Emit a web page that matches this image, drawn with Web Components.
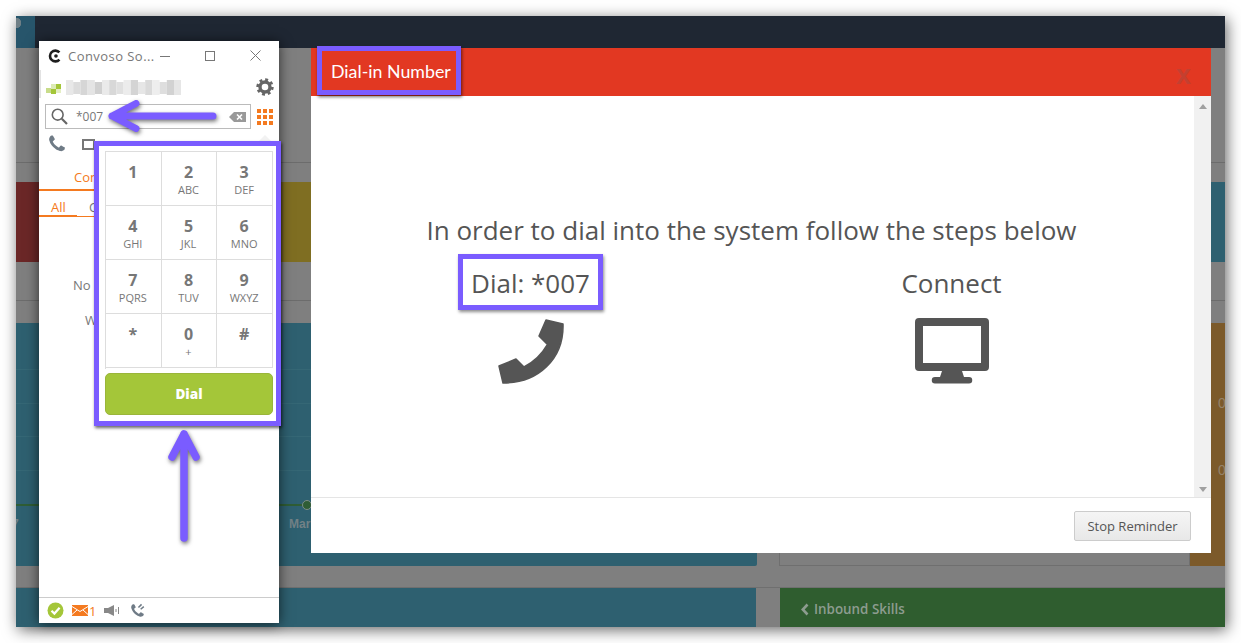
<!DOCTYPE html>
<html lang="en">
<head>
<meta charset="utf-8">
<title>Dial-in Number</title>
<style>
  html, body { margin: 0; background: #fff; overflow: hidden; }
  body { font-family: "Open Sans", sans-serif; }
</style>
</head>
<body>
<help-shot>
  <dash-backdrop></dash-backdrop>
  <soft-phone></soft-phone>
  <reminder-modal></reminder-modal>
</help-shot>

<script>
const PHONE_D = 'M1600 1240q0 27-10 70.5t-21 68.5q-21 50-122 106-94 51-186 51-27 0-53-3.5t-57.5-12.5-47-14.5-55.5-20.5-49-18q-98-35-175-83-127-79-264-216t-216-264q-48-77-83-175-3-9-18-49t-20.5-55.5-14.5-47-12.5-57.5-3.5-53q0-92 51-186 56-101 106-122 25-11 68.5-21t70.5-10q14 0 21 3 18 6 53 76 11 19 30 54t35 63.5 31 53.5q3 4 17.5 25t21.5 35.5 7 28.5q0 20-28.5 50t-62 55-62 53-28.5 46q0 9 5 22.5t8.5 20.5 14 24 11.5 19q76 137 174 235t235 174q2 1 19 11.5t24 14 20.5 8.5 22.5 5q18 0 46-28.5t53-62 55-62 50-28.5q14 0 28.5 7t35.5 21.5 25 17.5q25 15 53.5 31t63.5 35 54 30q70 35 76 53 3 7 3 21z'

class HelpShot extends HTMLElement {
  constructor () {
    super()
    this.shadow = this.attachShadow({ mode: 'open' })
  }

  connectedCallback () {
    this.shadow.innerHTML =
      /* html */`
      <style>
        :host {
          display: block;
          position: relative;
          width: 1209px;
          height: 611px;
          margin: 16px;
          box-shadow: 2px 3px 14px rgba(0, 0, 0, 0.6);
        }
      </style>
      <slot></slot>
      `
  }
}

class DashBackdrop extends HTMLElement {
  constructor () {
    super()
    this.shadow = this.attachShadow({ mode: 'open' })
  }

  connectedCallback () {
    this.shadow.innerHTML =
      /* html */`
      <style>
        * { box-sizing: border-box; }
        :host {
          display: flex;
          flex-direction: column;
          width: 1209px;
          height: 611px;
          overflow: hidden;
          background: #7f7f7f;
          font-family: "Liberation Sans", sans-serif;
        }
        .top { height: 32px; background: #1f2733; flex: none; }
        .top div { width: 19px; height: 32px; background: radial-gradient(circle at 0 7px, #6f7f86 5px, transparent 5.5px), #27556b; }
        .strip { flex: none; height: 134px; padding-top: 114px; }
        .strip.small { height: 61px; padding-top: 38px; }
        .strip div { height: 1px; background: #6c6c6c; }
        .cards { flex: none; height: 80px; display: grid; grid-template-columns: 104px 1fr 400px 14px; }
        .red { background: #6b2727; }
        .olive { background: #7f6e22; }
        .teal { background: #2e6070; }
        .panels { flex: none; height: 243px; display: flex; gap: 22px; }
        .chart {
          width: 741px;
          position: relative;
          background: #2e6070;
          border-radius: 0 0 2px 0;
        }
        .gridline { position: absolute; left: 0; right: 0; height: 1px; background: #356775; }
        .trend { position: absolute; left: 0; right: 0; top: 181px; height: 2px; background: #2f5d35; }
        .dot {
          position: absolute;
          left: 286px;
          top: 177px;
          width: 10px;
          height: 10px;
          border-radius: 50%;
          background: #2f5d35;
          border: 1px solid #7d8d86;
        }
        .tick { position: absolute; top: 194px; font-size: 12px; font-weight: bold; color: #728186; }
        .side { flex: 1; display: flex; }
        .box { flex: 1; border: 1px solid #6f6f6f; border-top: 0; }
        .brown {
          width: 35px;
          background: #7c5a2a;
          color: #95836a;
          font-size: 14px;
          position: relative;
        }
        .brown span { position: absolute; left: 28px; }
        .gap { flex: none; height: 22px; border-bottom: 1px solid #6f6f6f; }
        .bottom { flex: 1; display: flex; gap: 24px; }
        .bottom .teal { width: 740px; }
        .skills {
          flex: 1;
          display: flex;
          align-items: center;
          gap: 5px;
          background: #2f5d2f;
          color: #8d9c8f;
          font: 600 13.4px "Open Sans", sans-serif;
          padding: 3px 0 0 21px;
        }
        .skills svg { flex: none; }
      </style>
      <div class="top"><div></div></div>
      <div class="strip"><div></div></div>
      <div class="cards">
        <div class="red"></div>
        <div class="olive"></div>
        <div></div>
        <div class="teal"></div>
      </div>
      <div class="strip small"><div></div></div>
      <div class="panels">
        <div class="chart">
          <div class="gridline" style="top:46px"></div>
          <div class="gridline" style="top:80px"></div>
          <div class="gridline" style="top:113px"></div>
          <div class="gridline" style="top:147px"></div>
          <div class="trend"></div>
          <div class="dot"></div>
          <span class="tick" style="left:-4px">7</span>
          <span class="tick" style="left:273px">Mar</span>
        </div>
        <div class="side">
          <div class="box"></div>
          <div class="brown">
            <span style="top:72px">0</span>
            <span style="top:139px">0</span>
          </div>
        </div>
      </div>
      <div class="gap"></div>
      <div class="bottom">
        <div class="teal"></div>
        <div class="skills">
          <svg width="8" height="13" viewBox="0 0 8 13"><path d="M6.5 1.5L1.8 6.5L6.5 11.5" fill="none" stroke="#8d9c8f" stroke-width="2.6"/></svg>
          <span>Inbound Skills</span>
        </div>
      </div>
      `
  }
}

class SoftPhone extends HTMLElement {
  constructor () {
    super()
    this.shadow = this.attachShadow({ mode: 'open' })
  }

  connectedCallback () {
    this.shadow.innerHTML =
      /* html */`
      <style>
        * { box-sizing: border-box; }
        :host {
          display: flex;
          flex-direction: column;
          position: absolute;
          left: 23px;
          top: 25px;
          width: 240px;
          height: 582px;
          background: #fff;
          box-shadow: 0 1px 12px rgba(0, 0, 0, 0.65);
          color: #777;
          font-family: "Open Sans", sans-serif;
        }
        .title { flex: none; height: 29px; display: flex; align-items: center; padding-left: 9px; font-size: 13px; letter-spacing: 0.45px; color: #777; }
        .title svg { flex: none; }
        .title span { margin-left: 6px; width: 84px; white-space: nowrap; }
        .win { margin-left: 8px; display: flex; gap: 35px; align-items: center; }
        .account {
          flex: none;
          height: 34px;
          display: flex;
          align-items: center;
          justify-content: space-between;
          padding: 0 5px 0 7px;
          position: relative;
        }
        .account::before {
          content: "";
          position: absolute;
          left: 0;
          top: 0;
          width: 2px;
          height: 28px;
          background: #e2e2e2;
        }
        .search { flex: none; height: 25px; display: flex; align-items: center; gap: 6px; padding: 0 6px; }
        .field {
          width: 206px;
          height: 25px;
          border: 1px solid #bbb;
          display: flex;
          align-items: center;
          padding: 0 4px 0 5px;
          font-size: 12px;
          color: #777;
        }
        .field span { margin-left: 8px; flex: 1; }
        .tools { flex: none; height: 30px; display: flex; align-items: center; gap: 15px; padding: 0 8px; }
        .square { width: 13px; height: 11px; border: 2px solid #777; }
        .caret {
          position: absolute;
          left: 219px;
          top: 94px;
          width: 0;
          height: 0;
          border: 7px solid transparent;
          border-top: 0;
          border-bottom-color: #f2f2f2;
        }
        .tab { flex: none; height: 32px; padding: 9px 0 0 35px; font-size: 13px; color: #f47a20; line-height: 18px; border-bottom: 2px solid #f47a20; }
        .sub { flex: none; height: 26px; display: flex; padding-top: 7px; font-size: 13px; line-height: 18px; position: relative; }
        .sub b { font-weight: 400; color: #f47a20; width: 38px; padding-left: 12px; border-bottom: 2px solid #f47a20; }
        .sub i { font-style: normal; flex: 1; padding-left: 12px; border-bottom: 1px solid #f47a20; color: #777; }
        .list { flex: 1; position: relative; font-size: 13px; }
        .list span { position: absolute; }
        .status { flex: none; height: 26px; border-top: 1px solid #ccc; display: flex; align-items: center; padding: 0 0 0 8px; }
        .status svg { flex: none; }
        .count { color: #f47a20; font-size: 13px; margin: 0 8px 0 1px; }
        dial-pad { position: absolute; left: 55px; top: 100px; }
        .arrow { position: absolute; overflow: visible; filter: drop-shadow(1px 2px 2px rgba(0, 0, 0, 0.55)); }
      </style>
      <div class="title">
        <svg width="14" height="14" viewBox="0 0 13 13">
          <path d="M10.6 3.2A5 5 0 1 0 10.6 9.8" fill="none" stroke="#1d1d1d" stroke-width="2.4"/>
          <circle cx="7.4" cy="6.5" r="1.7" fill="#1d1d1d"/>
        </svg>
        <span>Convoso So...</span>
        <div class="win">
          <svg width="10" height="10" viewBox="0 0 10 10"><path d="M0 5.5H10" stroke="#777" fill="none"/></svg>
          <svg width="10" height="10" viewBox="0 0 10 10"><rect x="0.5" y="0.5" width="9" height="9" fill="none" stroke="#777"/></svg>
          <svg width="11" height="11" viewBox="0 0 11 11"><path d="M0.5 0.5L10.5 10.5M10.5 0.5L0.5 10.5" stroke="#777" fill="none"/></svg>
        </div>
      </div>
      <div class="account">
        <blur-name></blur-name>
        <svg width="18" height="18" viewBox="0 0 18 18">
          <circle cx="9" cy="9" r="5" fill="none" stroke="#666" stroke-width="3.4"/>
          <circle cx="9" cy="9" r="7.4" fill="none" stroke="#666" stroke-width="2.6" stroke-dasharray="2.9 2.9"/>
        </svg>
      </div>
      <div class="search">
        <div class="field">
          <svg width="17" height="17" viewBox="0 0 17 17">
            <circle cx="6.7" cy="6.7" r="5.4" fill="none" stroke="#666" stroke-width="1.6"/>
            <path d="M10.8 10.8L16 16" stroke="#666" stroke-width="2.2" fill="none"/>
          </svg>
          <span>*007</span>
          <svg width="17" height="10" viewBox="0 0 17 10">
            <path d="M5 0H17V10H5L0 5Z" fill="#999"/>
            <path d="M8 2.5L13 7.5M13 2.5L8 7.5" stroke="#fff" stroke-width="1.6" fill="none"/>
          </svg>
        </div>
        <svg width="16" height="16" viewBox="0 0 16 16" fill="#f47a20">
          <rect width="4" height="4"/><rect x="6" width="4" height="4"/><rect x="12" width="4" height="4"/>
          <rect y="6" width="4" height="4"/><rect x="6" y="6" width="4" height="4"/><rect x="12" y="6" width="4" height="4"/>
          <rect y="12" width="4" height="4"/><rect x="6" y="12" width="4" height="4"/><rect x="12" y="12" width="4" height="4"/>
        </svg>
      </div>
      <div class="tools">
        <svg width="20" height="20" viewBox="0 0 1792 1792"><path fill="#6f7b86" d="${PHONE_D}"/></svg>
        <div class="square"></div>
      </div>
      <div class="caret"></div>
      <div class="tab">Con</div>
      <div class="sub"><b>All</b><i>C</i></div>
      <div class="list">
        <span style="left:34px;top:59px">No</span>
        <span style="left:46px;top:94px">W</span>
      </div>
      <div class="status">
        <svg width="17" height="17" viewBox="0 0 17 17">
          <circle cx="8.5" cy="8.5" r="8" fill="#a4c639"/>
          <path d="M4.5 8.8L7.4 11.6L12.6 5.8" stroke="#fff" stroke-width="2.2" fill="none"/>
        </svg>
        <svg style="margin-left:8px" width="16" height="11" viewBox="0 0 16 11">
          <rect width="16" height="11" fill="#f47a20"/>
          <path d="M0 1.5L8 6.5L16 1.5M0 9.5L5 5M16 9.5L11 5" stroke="#fff" fill="none"/>
        </svg>
        <span class="count">1</span>
        <svg width="16" height="11" viewBox="0 0 16 11" fill="#888">
          <rect y="3" width="4" height="5"/><path d="M4 3L10 0V11L4 8Z"/>
          <rect x="11.5" y="4" width="1" height="3"/><rect x="14" y="2" width="1" height="7"/>
        </svg>
        <svg style="margin-left:9px" width="17" height="16" viewBox="0 0 1792 1792">
          <path fill="#6f7b86" d="${PHONE_D}"/>
          <path d="M1000 500L1350 150M1250 700L1600 400" stroke="#6f7b86" stroke-width="170" fill="none"/>
        </svg>
      </div>
      <dial-pad></dial-pad>
      <svg class="arrow" style="left:70px;top:61px" width="108" height="28" viewBox="0 0 108 28">
        <path d="M104 14H3M27 1.5L3 14L27 26.5" fill="none" stroke="#7a5cff" stroke-width="7" stroke-linecap="round" stroke-linejoin="round"/>
      </svg>
      <svg class="arrow" style="left:131px;top:389px" width="28" height="112" viewBox="0 0 28 112">
        <path d="M14 108V4M2 27L14 4L26 27" fill="none" stroke="#7a5cff" stroke-width="7.5" stroke-linecap="round" stroke-linejoin="round"/>
      </svg>
      `
  }
}

class BlurName extends HTMLElement {
  constructor () {
    super()
    this.shadow = this.attachShadow({ mode: 'open' })
  }

  connectedCallback () {
    // the reference hides this account name behind pixel blocks
    const tones = ['#e8e8e8', '#dcdcdc', '#d6d6d6', '#e4e4e4', '#d0d0d0', '#eaeaea', '#d8d8d8', '#e0e0e0', '#ececec', '#d4d4d4', '#e6e6e6', '#dadada', '#eeeeee', '#dedede', '#d2d2d2', '#e6e6e6']
    const blocks = tones.map((tone, i) =>
      `<rect x="${20 + i * 7.2}" y="${i % 3 === 1 ? 3 : 1}" width="7.2" height="${i % 3 === 1 ? 12 : 15}" fill="${tone}"/>`
    ).join('')
    this.shadow.innerHTML =
      /* html */`
      <style>
        :host { display: block; height: 17px; filter: blur(0.7px); }
        svg { display: block; }
      </style>
      <svg width="135" height="17" viewBox="0 0 135 17">
        <rect x="0" y="9" width="5" height="5" fill="#c8dc8a"/>
        <rect x="5" y="5" width="5" height="5" fill="#dcebb5"/>
        <rect x="5" y="10" width="5" height="5" fill="#a4c639"/>
        <rect x="10" y="5" width="5" height="5" fill="#a4c639"/>
        <rect x="10" y="10" width="5" height="4" fill="#e4eec4"/>
        ${blocks}
      </svg>
      `
  }
}

class DialPad extends HTMLElement {
  constructor () {
    super()
    this.shadow = this.attachShadow({ mode: 'open' })
  }

  connectedCallback () {
    const keys = [['1', ''], ['2', 'ABC'], ['3', 'DEF'], ['4', 'GHI'], ['5', 'JKL'], ['6', 'MNO'], ['7', 'PQRS'], ['8', 'TUV'], ['9', 'WXYZ'], ['*', ''], ['0', '+'], ['#', '']]
    this.shadow.innerHTML =
      /* html */`
      <style>
        * { box-sizing: border-box; }
        :host {
          display: block;
          width: 187px;
          height: 285px;
          padding: 5px 3px 0 6px;
          background: #fff;
          border: 5px solid #7a5cff;
          box-shadow: 1px 2px 3px rgba(0, 0, 0, 0.6);
          font-family: "Open Sans", sans-serif;
        }
        .keys {
          display: grid;
          grid-template-columns: repeat(3, 1fr);
          grid-auto-rows: 54px;
          width: 168px;
          height: 218px;
          border-top: 1px solid #ddd;
          border-left: 1px solid #ddd;
        }
        button {
          display: block;
          width: 168px;
          height: 42px;
          margin-top: 4px;
          padding: 0;
          background: #a4c639;
          border: 1px solid #9ab53a;
          border-radius: 5px;
          color: #fff;
          font: 800 13.5px "Open Sans", sans-serif;
        }
      </style>
      <div class="keys">
        ${keys.map(k => `<dial-key digit="${k[0]}" letters="${k[1]}"></dial-key>`).join('')}
      </div>
      <button>Dial</button>
      `
  }
}

class DialKey extends HTMLElement {
  constructor () {
    super()
    this.shadow = this.attachShadow({ mode: 'open' })
  }

  connectedCallback () {
    this.shadow.innerHTML =
      /* html */`
      <style>
        :host {
          display: flex;
          flex-direction: column;
          align-items: center;
          padding: 9px 1px 0 0;
          border-right: 1px solid #ddd;
          border-bottom: 1px solid #ddd;
          color: #777;
          text-align: center;
        }
        b { font-size: 16px; line-height: 22px; }
        span { font-size: 11px; line-height: 14px; margin-top: 0; }
      </style>
      <b>${this.getAttribute('digit')}</b>
      <span>${this.getAttribute('letters')}</span>
      `
  }
}

class ReminderModal extends HTMLElement {
  constructor () {
    super()
    this.shadow = this.attachShadow({ mode: 'open' })
  }

  connectedCallback () {
    this.shadow.innerHTML =
      /* html */`
      <style>
        * { box-sizing: border-box; }
        :host {
          display: flex;
          flex-direction: column;
          position: absolute;
          left: 295px;
          top: 32px;
          width: 900px;
          height: 505px;
          background: #fff;
          font-family: "Open Sans", sans-serif;
          color: #555;
        }
        header {
          flex: none;
          height: 48px;
          background: #e23822;
          display: flex;
          align-items: flex-start;
          justify-content: space-between;
          padding-left: 6px;
        }
        h4 {
          margin: -2px 0 0;
          width: 144px;
          height: 49px;
          border: 5px solid #7a5cff;
          box-shadow: 1px 2px 3px rgba(0, 0, 0, 0.55);
          color: #fff;
          font: 400 17.8px/41px "Lato", sans-serif;
          padding-left: 9px;
          white-space: nowrap;
        }
        .close { color: #c44030; font: bold 27px/27px "Liberation Sans", sans-serif; margin: 14px 20px 0 0; }
        .main { flex: 1; display: flex; min-height: 0; }
        .content { flex: 1; padding-top: 116px; }
        h2 { margin: 0 2px 6px 0; font-weight: 400; font-size: 26px; line-height: 36px; text-align: center; }
        .steps { display: grid; grid-template-columns: 421px 421px; padding-left: 9px; }
        .bar {
          flex: none;
          width: 17px;
          background: #f1f1f1;
          display: flex;
          flex-direction: column;
          justify-content: space-between;
          align-items: center;
          padding: 8px 0 5px;
        }
        .bar i { width: 0; height: 0; border: 4px solid transparent; }
        .bar i:first-child { border-top: 0; border-bottom: 5px solid #a0a0a0; }
        .bar i:last-child { border-bottom: 0; border-top: 5px solid #a0a0a0; }
        footer {
          flex: none;
          height: 56px;
          border-top: 1px solid #e5e5e5;
          display: flex;
          justify-content: flex-end;
          align-items: flex-start;
          padding: 13px 20px 0 0;
        }
        button {
          width: 117px;
          height: 30px;
          padding: 0;
          background: linear-gradient(#f5f5f5, #e8e8e8);
          border: 1px solid #ccc;
          border-radius: 2px;
          color: #555;
          font: 13px "Open Sans", sans-serif;
        }
      </style>
      <header>
        <h4>Dial-in Number</h4>
        <span class="close">x</span>
      </header>
      <div class="main">
        <div class="content">
          <h2>In order to dial into the system follow the steps below</h2>
          <div class="steps">
            <dial-step label="Dial: *007" marked>
              <svg width="68" height="67" viewBox="-1 -1 68 67">
                <path d="M48 1L65 5C66 40 40 64 5 64L1 47L18 40L26 48C36 43 44 35 49.5 25.5L41 17Z" fill="#555" stroke="#555" stroke-width="1.5" stroke-linejoin="round"/>
              </svg>
            </dial-step>
            <dial-step label="Connect">
              <svg width="74" height="66" viewBox="0 0 74 66">
                <path fill="#555" fill-rule="evenodd" d="M4 0H70A4 4 0 0 1 74 4V49A4 4 0 0 1 70 53H47L49 59H54A3 3 0 0 1 54 65.5H20A3 3 0 0 1 20 59H25L27 53H4A4 4 0 0 1 0 49V4A4 4 0 0 1 4 0ZM8 8V45H66V8Z"/>
              </svg>
            </dial-step>
          </div>
        </div>
        <div class="bar"><i></i><i></i></div>
      </div>
      <footer><button>Stop Reminder</button></footer>
      `
  }
}

class DialStep extends HTMLElement {
  constructor () {
    super()
    this.shadow = this.attachShadow({ mode: 'open' })
  }

  connectedCallback () {
    this.shadow.innerHTML =
      /* html */`
      <style>
        :host {
          display: flex;
          flex-direction: column;
          align-items: center;
          font-size: 26px;
          color: #555;
        }
        .label {
          height: 56px;
          padding: 2px 8px 0;
          border: 5px solid transparent;
          line-height: 44px;
          white-space: nowrap;
          box-sizing: border-box;
        }
        :host([marked]) .label {
          border-color: #7a5cff;
          box-shadow: 1px 2px 3px rgba(0, 0, 0, 0.45);
        }
        ::slotted(svg) { margin-top: 8px; }
      </style>
      <div class="label">${this.getAttribute('label')}</div>
      <slot></slot>
      `
  }
}

customElements.define('help-shot', HelpShot)
customElements.define('dash-backdrop', DashBackdrop)
customElements.define('soft-phone', SoftPhone)
customElements.define('blur-name', BlurName)
customElements.define('dial-pad', DialPad)
customElements.define('dial-key', DialKey)
customElements.define('reminder-modal', ReminderModal)
customElements.define('dial-step', DialStep)
</script>
</body>
</html>
